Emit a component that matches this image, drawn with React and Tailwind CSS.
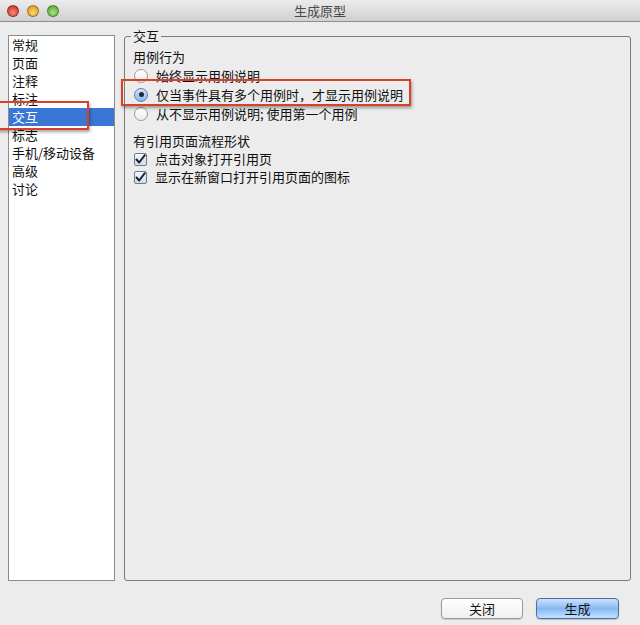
import React from "react";

const font = { fontFamily: '"Noto Sans CJK SC", "Noto Sans", sans-serif' };

const items = ["常规", "页面", "注释", "标注", "交互", "标志", "手机/移动设备", "高级", "讨论"];

function Light({ from, to }) {
  return (
    <span
      className="w-[12px] h-[12px] rounded-full border border-black/30"
      style={{ background: `radial-gradient(circle at 50% 65%, ${from}, ${to})` }}
    />
  );
}

function Radio({ checked, label }) {
  return (
    <div className="flex items-center h-[19px] leading-[19px]">
      <span
        className={
          "w-[14px] h-[14px] rounded-full border flex items-center justify-center ml-[134px] " +
          (checked
            ? "border-[#5a7fb5] bg-gradient-to-b from-[#d6e6f8] to-[#8bb6e6]"
            : "border-[#9a9a9a] bg-gradient-to-b from-white to-[#ececec]")
        }
      >
        {checked && <span className="w-[5px] h-[5px] rounded-full bg-[#1e2a3a]" />}
      </span>
      <span className="ml-[8px]">{label}</span>
    </div>
  );
}

function Check({ label }) {
  return (
    <div className="flex items-center h-[18px] leading-[18px]">
      <span className="w-[13px] h-[13px] ml-[134px] rounded-[2px] border border-[#6f7a8a] bg-gradient-to-b from-[#f4f8fd] to-[#cfdcec] flex items-center justify-center">
        <svg width="11" height="11" viewBox="0 0 11 11">
          <path d="M1.5 5.5 L4.2 8.5 L9.8 1.2" fill="none" stroke="#1d2333" strokeWidth="2" strokeLinecap="round" strokeLinejoin="round" />
        </svg>
      </span>
      <span className="ml-[8px]">{label}</span>
    </div>
  );
}

export default function App() {
  return (
    <div className="relative w-[640px] h-[625px] bg-[#ececec] flex flex-col text-[13px] text-[#111] overflow-hidden" style={font}>
      <div className="relative h-[22px] flex items-center bg-gradient-to-b from-[#ececec] to-[#d0d0d0] border-b border-[#8e8e8e]">
        <div className="flex gap-[8px] pl-[7px]">
          <Light from="#f78a7c" to="#c1231a" />
          <Light from="#ffd77a" to="#d6890f" />
          <Light from="#a8e38a" to="#4c9c2a" />
        </div>
        <div className="absolute inset-0 flex items-center justify-center text-[13px] text-[#4a4a4a]">生成原型</div>
      </div>

      <div className="flex pl-[8px] pt-[13px] h-[559px]">
        <div className="w-[107px] h-[546px] bg-white border border-[#8c8c8c]">
          {items.map((t) => (
            <div
              key={t}
              className={"h-[18px] leading-[17px] pl-[3px] " + (t === "交互" ? "bg-[#3a76d5] text-white" : "")}
            >
              {t}
            </div>
          ))}
        </div>

        <div className="relative ml-[9px] w-[507px] h-[545px] mt-[1px] border border-[#7a7a7a] rounded-[3px]">
          <div className="absolute left-[6px] top-[-10px] px-[2px] bg-[#ececec] leading-[18px]">交互</div>
          <div className="pt-[10px] -ml-[125px]">
            <div className="pl-[133px] h-[19px] leading-[19px]">用例行为</div>
            <Radio label="始终显示用例说明" />
            <Radio checked label="仅当事件具有多个用例时，才显示用例说明" />
            <Radio label="从不显示用例说明; 使用第一个用例" />
            <div className="pl-[133px] mt-[8px] h-[19px] leading-[19px]">有引用页面流程形状</div>
            <Check label="点击对象打开引用页" />
            <Check label="显示在新窗口打开引用页面的图标" />
          </div>
        </div>
      </div>

      <div className="flex justify-end gap-[13px] pr-[21px] pt-[17px]">
        <button className="w-[82px] h-[21px] rounded-[4px] border border-[#9a9a9a] bg-gradient-to-b from-white to-[#f0f0f0] text-[13px] leading-none shadow-[0_1px_1px_rgba(0,0,0,0.15)]">
          关闭
        </button>
        <button className="w-[83px] h-[21px] rounded-[4px] border border-[#4a6fa8] bg-gradient-to-b from-[#cfe3fb] via-[#86b8f2] to-[#c4e0ff] text-[13px] leading-none shadow-[0_1px_1px_rgba(0,0,0,0.2)]">
          生成
        </button>
      </div>

      <div className="absolute left-[-3px] top-[101px] w-[92px] h-[29px] border-2 border-[#d8402a] shadow-[1px_2px_3px_rgba(0,0,0,0.35)]" />
      <div className="absolute left-[121px] top-[79px] w-[290px] h-[27px] border-2 border-[#d8402a] shadow-[1px_2px_3px_rgba(0,0,0,0.35)]" />
    </div>
  );
}
